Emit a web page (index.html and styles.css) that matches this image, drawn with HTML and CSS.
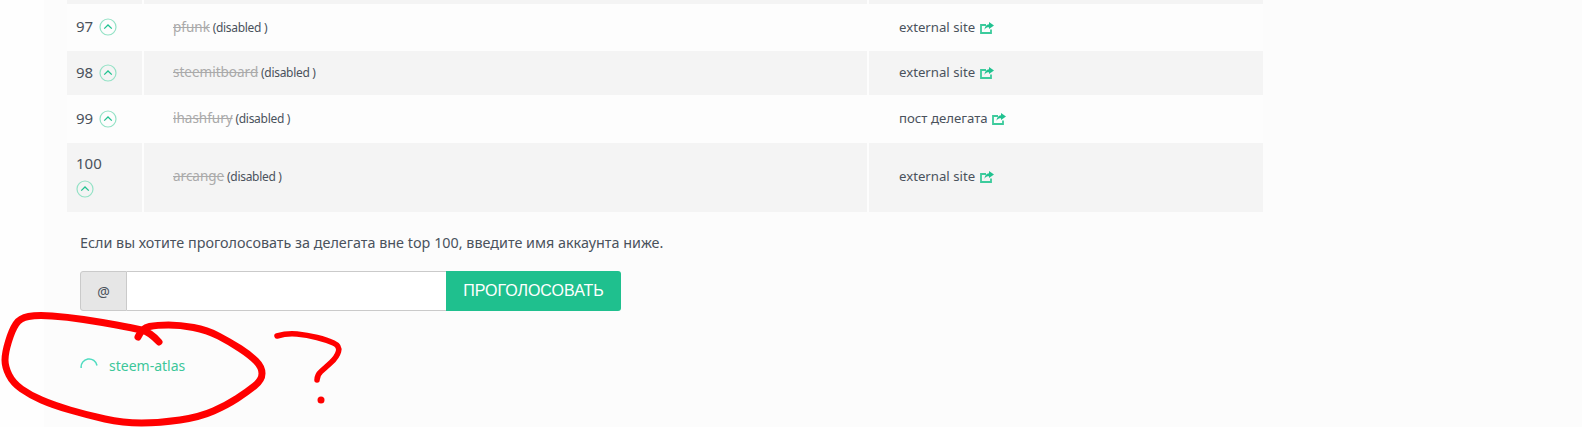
FILE: index.html
```html
<!DOCTYPE html>
<html lang="ru">
<head>
    <meta charset="UTF-8">
    <meta name="viewport" content="width=device-width, initial-scale=1.0">
    <title>Голосование за делегатов</title>
    <link rel="stylesheet" href="styles.css">
</head>
<body>
    <svg class="icon-defs" width="0" height="0">
        <symbol id="vote-up" viewBox="0 0 18 18">
            <circle cx="9" cy="9" r="8" fill="none" stroke="#94e2c6" stroke-width="1.200"/>
            <path d="M5.200 10.600 9 7l3.800 3.600" fill="none" stroke="#21c290" stroke-width="1.300"/>
        </symbol>
        <symbol id="ext-link" viewBox="0 0 14 12">
            <path d="M6 3H1v8h10V7.500" fill="none" stroke="#3ccb9c" stroke-width="1.800"/>
            <path d="M9 0l5 3.500L9 7V5.200C7 5.200 5.500 5.800 4.500 7.800 4.500 4.800 6.500 2.500 9 2.200z" fill="#21c290"/>
        </symbol>
    </svg>

    <div class="container">
        <table class="witnesses">
            <colgroup>
                <col class="col-rank">
                <col class="col-name">
                <col>
            </colgroup>
            <tr class="row-cut"><td></td><td></td><td></td></tr>
            <tr>
                <td class="rank">97 <svg class="vote"><use href="#vote-up"/></svg></td>
                <td class="name"><span class="off">pfunk</span> (disabled )</td>
                <td class="site">external site <svg class="ext"><use href="#ext-link"/></svg></td>
            </tr>
            <tr>
                <td class="rank">98 <svg class="vote"><use href="#vote-up"/></svg></td>
                <td class="name"><span class="off">steemitboard</span> (disabled )</td>
                <td class="site">external site <svg class="ext"><use href="#ext-link"/></svg></td>
            </tr>
            <tr>
                <td class="rank">99 <svg class="vote"><use href="#vote-up"/></svg></td>
                <td class="name"><span class="off">ihashfury</span> (disabled )</td>
                <td class="site">пост делегата <svg class="ext"><use href="#ext-link"/></svg></td>
            </tr>
            <tr>
                <td class="rank rank-wrap">100 <svg class="vote"><use href="#vote-up"/></svg></td>
                <td class="name"><span class="off">arcange</span> (disabled )</td>
                <td class="site">external site <svg class="ext"><use href="#ext-link"/></svg></td>
            </tr>
        </table>

        <p class="hint">Если вы хотите проголосовать за делегата вне top 100, введите имя аккаунта ниже.</p>

        <form class="vote-form">
            <span class="addon">@</span>
            <input class="account" type="text">
            <button class="submit" type="button">Проголосовать</button>
        </form>

        <div class="loading">
            <svg class="spinner" viewBox="0 0 18 18"><path d="M1.200 11A8 8 0 0 1 17 8.500"/></svg>
            <a class="atlas" href="#">steem-atlas</a>
        </div>
    </div>

    <svg class="scribble" width="360" height="427" viewBox="0 0 360 427">
        <path d="M159 342Q150 332 141.500 330Q133 328 116.500 325Q100 322 83.500 319.500Q67 317 52 316Q37 315 28.500 316.500Q20 318 16 324Q12 330 8.500 341.500Q5 353 5 360Q5 367 9 375Q13 383 21.500 389Q30 395 41.500 400Q53 405 70 410Q87 415 105 419Q123 423 141.500 423Q160 423 180 420Q200 417 213.500 411Q227 405 237 398.500Q247 392 254.500 386Q262 380 262 373.500Q262 367 256 361Q250 355 240 348.500Q230 342 218.500 336Q207 330 193.500 327.500Q180 325 168.500 325Q157 325 149.500 326.500Q142 328 138 337"/>
        <path class="thin" d="M277 336Q287 333 297 334Q307 335 317 337.500Q327 340 333.500 343Q340 346 338.500 351.500Q337 357 331 362.500Q325 368 321 371.500Q317 375 317 380"/>
        <circle cx="321" cy="400" r="3.500"/>
    </svg>
</body>
</html>
```

FILE: styles.css
```css
body {
    font-family: "Noto Sans", "Open Sans", sans-serif;
    font-size: 13.200px;
    color: #4a525c;
    background-color: #fefefe;
    margin: 0;
    height: 427px;
    overflow: hidden;
    position: relative;
}
.icon-defs {
    display: block;
}
.container {
    height: 427px;
    margin-left: 44px;
    padding-left: 23px;
    box-sizing: border-box;
    background: #fcfcfc;
}
.witnesses {
    width: 1196px;
    border-collapse: collapse;
    table-layout: fixed;
    background: #fdfdfd;
}
.col-rank {
    width: 76px;
}
.col-name {
    width: 725px;
}
.witnesses td {
    padding: 0 0 2px;
    box-sizing: border-box;
    vertical-align: middle;
}
.witnesses td + td {
    border-left: 2px solid #fdfdfd;
}
.witnesses tr:nth-child(odd) td {
    background: #f4f4f4;
}
.witnesses tr:nth-child(2) td {
    height: 47px;
}
.witnesses tr:nth-child(3) td {
    height: 44px;
}
.witnesses tr:nth-child(4) td {
    height: 48px;
}
.witnesses tr:nth-child(5) td {
    height: 69px;
    padding-bottom: 4px;
}
.witnesses .row-cut td {
    height: 4px;
    padding: 0;
}
.witnesses .rank {
    padding-left: 9px;
    font-size: 15px;
    line-height: 18px;
}
.witnesses .name {
    padding-left: 29px;
    font-size: 12px;
    letter-spacing: -0.3px;
}
.witnesses .site {
    padding-left: 30px;
}
.off {
    font-size: 13.500px;
    letter-spacing: 0;
    color: #aaa;
    text-decoration: line-through;
}
.vote {
    width: 18px;
    height: 18px;
    margin-left: 2px;
    vertical-align: -4px;
}
.rank-wrap .vote {
    display: block;
    margin: 8px 0 0;
}
.ext {
    width: 14px;
    height: 12px;
    margin-left: 1px;
    vertical-align: -2px;
}
.hint {
    margin: 21px 0 0 13px;
    font-size: 14.350px;
    line-height: 20px;
}
.vote-form {
    display: flex;
    width: 541px;
    height: 40px;
    margin: 18px 0 0 13px;
}
.addon {
    width: 47px;
    box-sizing: border-box;
    display: flex;
    align-items: center;
    justify-content: center;
    font-size: 14px;
    background: #e6e6e6;
    border: 1px solid #cacaca;
    border-radius: 3px 0 0 3px;
}
.account {
    width: 319px;
    box-sizing: border-box;
    border: 1px solid #cacaca;
    border-left: none;
    border-right: none;
    background: #fff;
    padding: 0;
}
.submit {
    flex: 1;
    background: #1fc08e;
    color: #fff;
    border: none;
    border-radius: 0 3px 3px 0;
    font-family: "Liberation Sans", Arial, sans-serif;
    font-size: 16px;
    text-transform: uppercase;
    padding: 0;
}
.loading {
    display: flex;
    align-items: center;
    margin: 45px 0 0 13px;
    gap: 11px;
}
.spinner {
    width: 18px;
    height: 18px;
    fill: none;
    stroke: #4fdcc0;
    stroke-width: 1.500;
}
.atlas {
    color: #3dc79a;
    text-decoration: none;
    font-size: 14px;
}
.scribble {
    position: absolute;
    left: 0;
    top: 0;
    fill: none;
    stroke: #ff0000;
    stroke-width: 7;
    stroke-linecap: round;
    stroke-linejoin: round;
}
.scribble .thin {
    stroke-width: 5.500;
}
.scribble circle {
    fill: #ff0000;
    stroke: none;
}
```
